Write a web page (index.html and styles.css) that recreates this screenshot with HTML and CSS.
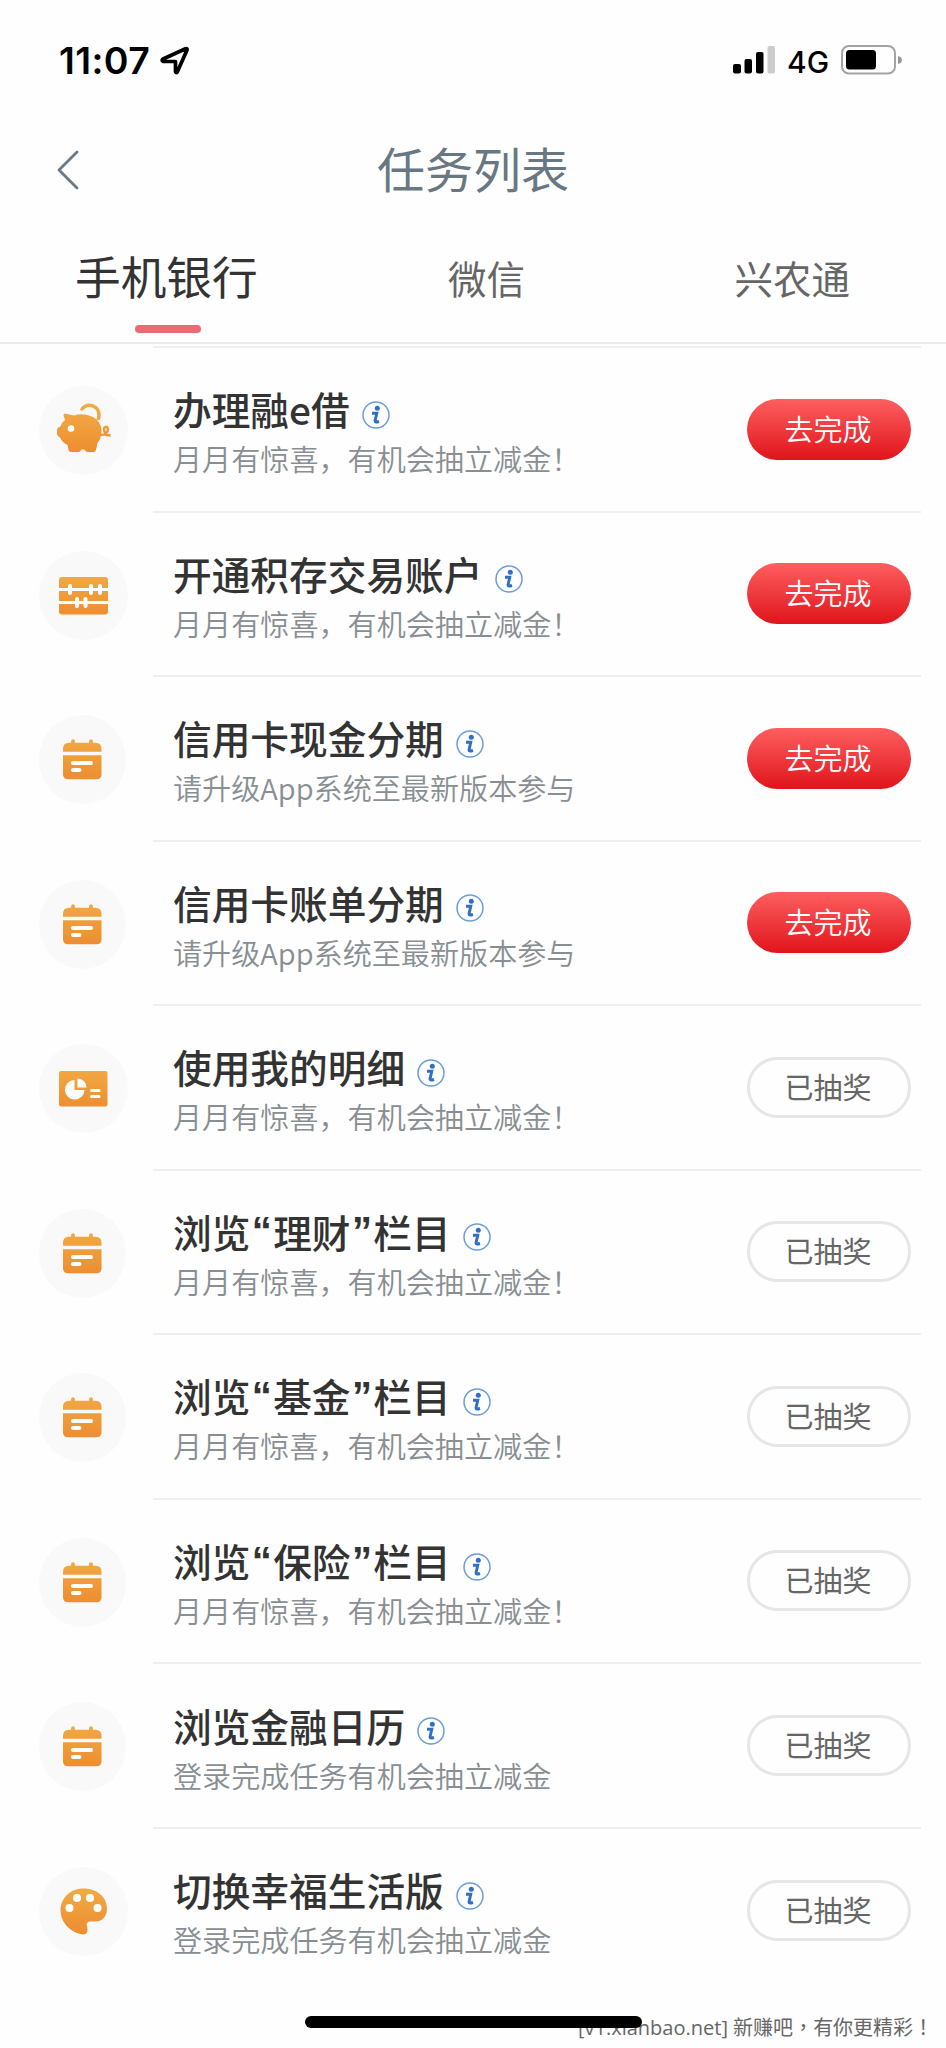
FILE: index.html
```html
<!DOCTYPE html>
<html lang="zh-CN">
<head>
<meta charset="utf-8">
<title>任务列表</title>
<link rel="stylesheet" href="styles.css">
</head>
<body>
<svg width="0" height="0" class="defs" aria-hidden="true">
  <defs>
    <linearGradient id="orange" x1="0" y1="20" x2="0" y2="70" gradientUnits="userSpaceOnUse">
      <stop offset="0" stop-color="#f2ac45"/><stop offset="1" stop-color="#ec8a2f"/>
    </linearGradient>
    <symbol id="calendar" viewBox="0 0 89 89">
      <g transform="translate(4 -0.8)">
      <path d="M31 27v4M49 27v4" stroke="#f0a643" stroke-width="3.800" stroke-linecap="round"/>
      <path d="M27 28.500H53.500Q59.500 28.500 59.500 34.500V37.500H21V34.500Q21 28.500 27 28.500Z" fill="url(#orange)"/>
      <path d="M21 41H59.500V60Q59.500 65 54.500 65H26Q21 65 21 60Z" fill="url(#orange)"/>
      <path d="M31 48.800H49M31 55.800H37.500" stroke="#fff" stroke-width="4" stroke-linecap="round"/>
      </g>
    </symbol>
    <symbol id="pig" viewBox="0 0 89 89">
      <path d="M43 23A9.500 9.500 0 0 1 60 29L59.500 32.500" fill="none" stroke="url(#orange)" stroke-width="3.500" stroke-linecap="round"/>
      <path d="M26 27.500L35 29.500Q42 27 50 29.500Q62 33 62.500 45Q62.500 52 58.500 57L57 64Q56.500 66 54.500 66H48.500Q46.500 66 46 64Q44 62.500 42 64Q41.500 66 39.500 66H32Q30 66 29.500 64L28.500 59Q23 56 21 51.500Q18.500 50.500 18 48V43.500Q18.500 41 21.500 40.500Q23 36 26 34L24.500 29.500Q24.500 27.500 26 27.500Z" fill="url(#orange)"/>
      <circle cx="32" cy="42.500" r="3.300" fill="#fff"/>
      <path d="M61 49Q68.500 49 69 43.500Q68.500 39.500 65.500 41.500Q64 44 67.500 49L71.500 49.500" fill="none" stroke="url(#orange)" stroke-width="2.600"/>
    </symbol>
    <symbol id="abacus" viewBox="0 0 89 89">
      <rect x="20" y="26" width="49" height="37.500" rx="3" fill="url(#orange)"/>
      <path d="M20 38.500H69M20 51.500H69" stroke="#fff" stroke-width="3.200"/>
      <path d="M31 35V42M52 35V42M61 35V42M38 48V55M46.500 48V55" stroke="#fff" stroke-width="4" stroke-linecap="round"/>
    </symbol>
    <symbol id="report" viewBox="0 0 89 89">
      <rect x="20" y="27" width="48.500" height="35.500" rx="2" fill="url(#orange)"/>
      <path d="M35.500 36V46H45.500A9.800 9.800 0 1 1 35.500 36Z" fill="#fff"/>
      <path d="M38.500 34.500A9 9 0 0 1 47.500 43.500H38.500Z" fill="#fff"/>
      <path d="M52.500 46.500H60M52.500 52.500H60" stroke="#fff" stroke-width="3" stroke-linecap="round"/>
    </symbol>
    <symbol id="palette" viewBox="0 0 89 89">
      <path d="M44.500 21.500C58 21.500 68 30 68 41.500C68 50 63 54.500 56 54.500H51.500C48.500 54.500 47 56.500 48 59.500C49.500 64 48 68 43.500 67.500C30 65 21.500 55 21.500 43C22 30 32 21.500 44.500 21.500Z" fill="url(#orange)"/>
      <circle cx="30.500" cy="41" r="4" fill="#fff"/><circle cx="38" cy="31" r="4" fill="#fff"/>
      <circle cx="51" cy="31" r="4" fill="#fff"/><circle cx="58.500" cy="41" r="4" fill="#fff"/>
    </symbol>
    <symbol id="info" viewBox="0 0 28 28">
      <circle cx="14" cy="14" r="13" fill="#fff" stroke="#6a9edb" stroke-width="1.500"/>
      <circle cx="15.300" cy="7.300" r="2.500" fill="#2f6fc4"/>
      <path d="M10 12.200H14.800L13 20Q13 21.800 17 20.500" fill="none" stroke="#2f6fc4" stroke-width="2.900"/>
    </symbol>
  </defs>
</svg>
<div class="screen">
  <div class="status">
    <span class="time">11:07</span>
    <svg class="loc" width="32" height="32" viewBox="0 0 32 32"><path d="M4 14L26.500 3.800Q28.500 3 28 5L18.500 26.500Q17.500 29 16.500 26.500V16.500H4.500Q2 15.500 4 14Z" fill="none" stroke="#000" stroke-width="3.700" stroke-linejoin="round"/></svg>
    <svg class="signal" width="42" height="28" viewBox="0 0 42 28"><rect y="18" width="8" height="9.500" rx="2"/><rect x="11.500" y="13" width="7.500" height="14.500" rx="2"/><rect x="23" y="6" width="7.500" height="21.500" rx="2"/><rect x="34.500" y="0" width="7.500" height="27.500" rx="2" fill="#ccc"/></svg>
    <span class="net">4G</span>
    <svg class="battery" width="62" height="30" viewBox="0 0 62 30"><rect x="1" y="1" width="53" height="27.500" rx="7" fill="none" stroke="#a3a3a3" stroke-width="2"/><rect x="5" y="5" width="30" height="19.500" rx="3.500"/><path d="M57 11Q61 12 61 15T57 19Z" fill="#999"/></svg>
  </div>
  <div class="nav">
    <svg class="back" width="24" height="42" viewBox="0 0 24 42"><path d="M21 3L3 21L21 39" fill="none" stroke="#687884" stroke-width="2.800" stroke-linecap="round" stroke-linejoin="round"/></svg>
    <h1 class="heading">任务列表</h1>
  </div>
  <div class="tabs">
    <div class="tab active">手机银行</div>
    <div class="tab wechat">微信</div>
    <div class="tab farm">兴农通</div>
  </div>
  <div class="list" id="list">
  </div>
  <div class="watermark">[v1.xianbao.net] 新赚吧<span class="tc" lang="zh-TW">，</span>有你更精彩<span class="tc" lang="zh-TW">！</span></div>
  <div class="homebar"></div>
</div>
<script src="app.js"></script>
</body>
</html>
```
FILE: app.js
```js
const draw = '月月有惊喜，有机会抽立减金！';
const upgrade = '请升级App系统至最新版本参与';
const login = '登录完成任务有机会抽立减金';
const tasks = [
  ['pig', '办理融e借', draw, true],
  ['abacus', '开通积存交易账户', draw, true],
  ['calendar', '信用卡现金分期', upgrade, true],
  ['calendar', '信用卡账单分期', upgrade, true],
  ['report', '使用我的明细', draw, false],
  ['calendar', '浏览“理财”栏目', draw, false],
  ['calendar', '浏览“基金”栏目', draw, false],
  ['calendar', '浏览“保险”栏目', draw, false],
  ['calendar', '浏览金融日历', login, false],
  ['palette', '切换幸福生活版', login, false]
];
const quotes = (text) => text.replace(/[“”]/g, '<span class="quote">$&</span>');
document.getElementById('list').innerHTML = tasks.map(([icon, title, sub, todo]) => `
  <div class="row">
    <div class="avatar ${icon}"><svg width="89" height="89"><use href="#${icon}"/></svg></div>
    <div class="body">
      <div class="text">
        <div class="title">${quotes(title)}<svg class="info" width="28" height="28"><use href="#info"/></svg></div>
        <div class="sub">${sub}</div>
      </div>
      <div class="btn ${todo ? 'todo' : 'done'}">${todo ? '去完成' : '已抽奖'}</div>
    </div>
  </div>`).join('');
```
FILE: styles.css
```css
* { box-sizing: border-box; }
body { margin: 0; background: #fefefe; font-family: "Noto Sans CJK SC", sans-serif; }
.defs { position: absolute; }
.screen { position: relative; width: 946px; height: 2048px; overflow: hidden; }
.status { height: 120px; display: flex; align-items: flex-start; padding: 45px 43px 0 59px; font-family: Inter, sans-serif; color: #000; }
.time { width: 100px; font-size: 37.5px; line-height: 32px; font-weight: 600; letter-spacing: 0.4px; white-space: nowrap; }
.loc { margin-right: auto; }
.signal { margin-top: 1px; }
.net { width: 54px; margin-left: 12px; font-size: 30px; line-height: 34px; font-weight: 500; white-space: nowrap; }
.battery { flex: none; }
.nav { height: 100px; display: flex; align-items: center; padding-left: 56px; }
.back { flex: none; }
.heading { margin: -7px 0 0; width: 786px; text-align: center; font-size: 48px; line-height: 64px; font-weight: 400; color: #687782; }
.tabs { height: 124px; display: flex; border-bottom: 2px solid #ececee; }
.tab { font-size: 38.5px; line-height: 60px; color: #666; padding-top: 27px; white-space: nowrap; }
.active { width: 185px; margin-left: 75px; padding-top: 25px; font-size: 45.7px; color: #333; }
.active::after { content: ""; display: block; width: 66px; height: 8px; border-radius: 4px; margin: 20px auto 0 59.5px; background: #eb6b72; }
.wechat { margin-left: 188px; }
.farm { margin-left: 209.5px; }
.list { padding-top: 2px; }
.row { height: 164.55px; display: flex; }
.avatar { width: 89px; height: 89px; margin: 40px 25px 0 39px; border-radius: 50%; background: #f9f9f9; flex: none; }
.avatar svg { display: block; }
.calendar { width: 87px; margin-right: 27px; }
.calendar svg { margin-left: -1px; }
.body { width: 768px; border-top: 2px solid #efefef; display: flex; padding-left: 20px; }
.text { flex: 1; padding-top: 35.2px; }
.title { height: 50px; line-height: 50px; font-size: 38.7px; font-weight: 500; color: #333; display: flex; align-items: center; white-space: nowrap; }
.quote { width: 22.8px; text-align: center; font-family: "Liberation Sans", sans-serif; font-size: 40px; font-weight: 700; margin-top: 1px; }
.info { margin: 13px 0 0 12px; flex: none; }
.sub { height: 44px; line-height: 44px; margin-top: 3px; font-size: 29.1px; font-weight: 350; color: #888e92; white-space: nowrap; }
.btn { width: 164px; height: 61px; margin: 50.6px 10px 0 0; padding-right: 2px; border-radius: 31px; text-align: center; font-size: 29px; line-height: 59px; flex: none; }
.todo { color: #fff; background: linear-gradient(#fe5f60, #e0141b); font-weight: 350; }
.done { padding-right: 0; color: #666; border: 3px solid #e6e6e6; line-height: 52px; text-indent: -2px; }
.watermark { position: absolute; left: 578px; top: 2012px; font: 20px/30px "Open Sans", "Noto Sans CJK SC", sans-serif; color: #666; white-space: nowrap; }
.tc { font-family: "Noto Sans CJK TC", sans-serif; }
.homebar { position: absolute; left: 305px; top: 2016px; width: 337px; height: 12px; border-radius: 6px; background: #000; }
```
